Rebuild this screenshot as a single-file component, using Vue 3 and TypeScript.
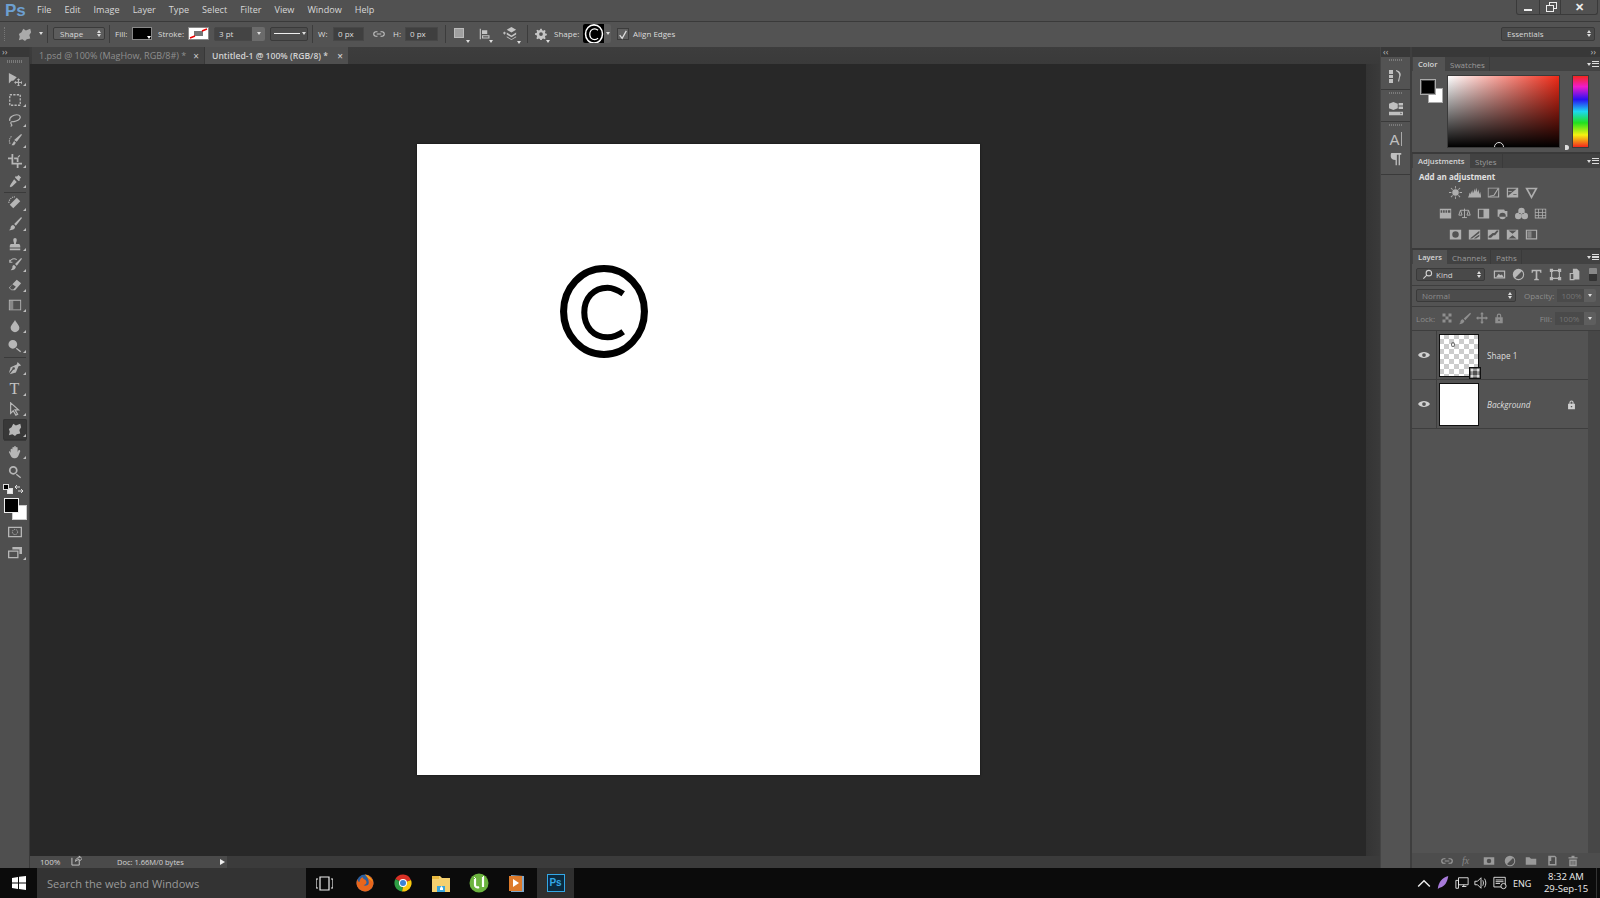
<script setup lang="ts">
import { h } from 'vue'

type IconDef = { f?: string; s?: string; sw?: number; dash?: string; o?: string }
const icons: Record<string, IconDef> = {
  move: { f: 'M1 1v12l3-3 2 0 4-4zM12 7l-2 2h1.3v2H9V10l-2 2 2 2v-1.3h2.3V15H10l2 2 2-2h-1.3v-2.300H15V14l2-2-2-2v1.300h-2.300V9H14z' },
  marquee: { s: 'M2 2h12v12H2z', sw: 1.5, dash: '2.600 1.400' },
  lasso: { s: 'M2 9c-1-4 4-7 8-7s5 3 3 5-6 3-9 3c-1 0-1 2 0 3s0 2-1 2', sw: 1.4 },
  quick: { f: 'M15 1l1 1-6 8-3-2zM7 9l2 2-2 3-3 0z', s: 'M4 4C1 6 1 11 3 13', sw: 1.2, dash: '1.500 1' },
  crop: { f: 'M4 0h2v10h10v2h-4v4h-2v-4H4V6H0V4h4zM7 4h5v5h-2V6H7zM13 1l1 1-2 2-1-1z' },
  dropper: { f: 'M12 1l3 3-2 2 1 1-2 1-4-4 1-2 1 1zM7 6l3 3-5 5-2 1-1-1 1-2z' },
  heal: { f: 'M10 2l4 4-8 8-4-4z', s: 'M1 8C1 4 4 1 8 1', sw: 1.2, dash: '1.500 1' },
  brush: { f: 'M15 0l1 1-7 9-2-2zM6 9l2 2c0 3-3 4-7 4 2-1 2-2 2-3s1-3 3-3z' },
  stamp: { f: 'M6 3a2 2 0 0 1 4 0c0 2-1 3-1 5h4l1 2v2H2v-2l1-2h4c0-2-1-3-1-5zM2 13h12v2H2z' },
  history: { f: 'M15 1l1 1-6 8-2-2zM7 9l2 2c0 2-2 4-6 4 1-1 2-2 2-3s0-3 2-3z', s: 'M2 6a5 5 0 0 1 8-3M2 3v3h3', sw: 1.2 },
  eraser: { f: 'M10 2l5 4-7 8H4l-3-3zM4 13l-2-2 3-4 4 3-3 3z' },
  gradient: { f: 'M1 2h14v12H1zM2 3v10h12V3z', o: 'M2 3h4v10H2z' },
  blur: { f: 'M8 1c2 4 5 6 5 9a5 5 0 0 1-10 0c0-3 3-5 5-9z' },
  dodge: { f: 'M5.500 1a5 5 0 1 1 0 10 5 5 0 0 1 0-10zM10 10l5 4-1 1-5-4z' },
  pen: { f: 'M11 1l4 4-3 1-3 7-7 2 4-5a1.500 1.500 0 1 0-1-1l-4 5 2-7 7-3z' },
  select: { s: 'M3 1l0 12 3-3 3 5 2-1-3-5h4z', sw: 1.4 },
  shape: { f: 'M6 2l3 2 5-2 1 4-2 3 1 4-4 1-2 2-3-2-4 1 1-4-1-3 3-2z' },
  hand: { f: 'M3 9V5c0-1 2-1 2 0v2V3c0-1 2-1 2 0v4V2c0-1 2-1 2 0v5V3c0-1 2-1 2 0v5l1-2c1-1 2 0 2 1l-2 5c-1 2-2 3-4 3H7c-2 0-3-1-4-3L1 8c0-1 1-1.500 2 1z' },
  zoom: { f: 'M6 1a5 5 0 1 1 0 10 5 5 0 0 1 0-10zM6 3a3 3 0 1 0 0 6 3 3 0 0 0 0-6zM10 10l5 4-1 1-5-4z' },
  qmask: { f: 'M0 2h16v12H0zM1.500 3.500v9h13v-9z', s: 'M11 8a3 3 0 1 1-6 0 3 3 0 0 1 6 0z', sw: 1, dash: '1.500 1' },
  screen: { f: 'M5 1h11v8h-3V4H5zM0 5h12v9H0zM1.500 6.500v6h9v-6z' },
  link: { s: 'M6 5H4a3 3 0 0 0 0 6h2M10 5h2a3 3 0 0 1 0 6h-2M5 8h6', sw: 1.4 },
  gear: { f: 'M7 1h2l.5 2 1.500.6 1.800-1 1.400 1.400-1 1.800.6 1.500 2 .5v2l-2 .5-.6 1.500 1 1.800-1.400 1.400-1.800-1-1.500.6-.5 2H7l-.5-2-1.500-.6-1.800 1-1.400-1.400 1-1.800L2.200 9.500 0 9V7l2.200-.5.600-1.500-1-1.800L3.200 2.200 5 3.200l1.500-.6zM8 5.500a2.500 2.500 0 1 0 0 5 2.500 2.500 0 0 0 0-5z' },
  align: { f: 'M1 1h1.500v14H1zM4 3h7v5H4zM4 9.500h10V14H4zM5.500 11v1.500h7V11z' },
  arrange: { f: 'M9 1l5 3-5 3-5-3zM4 7l5 3 5-3v2l-5 3-5-3zM4 11l5 3 5-3v1l-5 3-5-3zM0 7h1V6h1v1h1v1H2v1H1V8H0z' },
  eye: { f: 'M0 8c2-3 5-4 8-4s6 1 8 4c-2 3-5 4-8 4s-6-1-8-4zM8 5.500a2.500 2.500 0 1 0 0 5 2.500 2.500 0 0 0 0-5z' },
  lock: { f: 'M5 7V5a3 3 0 0 1 6 0v2h2v8H3V7zM6.500 7h3V5a1.500 1.500 0 0 0-3 0zM7 10v2h2v-2z' },
  search: { s: 'M14 6a4 4 0 1 0-8 0 4 4 0 0 0 8 0zM7 9l-5 5', sw: 1.6 },
  image: { f: 'M1 3h14v10H1zM2.500 4.500v7h11v-7zM4 11l3-4 2 2 2-1 2 3z' },
  adjust: { f: 'M8 1a7 7 0 1 1 0 14A7 7 0 0 1 8 1zM12 4L4 12a5.500 5.500 0 0 0 8-8z' },
  typeT: { f: 'M2 2h12v4h-1l-1-2H9v9l2 1v1H5v-1l2-1V4H4L3 6H2z' },
  xform: { f: 'M1 1h4v1.500h6V1h4v4h-1.500v6H15v4h-4v-1.500H5V15H1v-4h1.500V5H1zM4 5v6h1v1h6v-1h1V5h-1V4H5v1z' },
  doc: { f: 'M2 6h4V1h5l3 3v10H8v1H2zM3.500 7.500v6h3v-6z' },
  sun: { f: 'M8 4a4 4 0 1 1 0 8 4 4 0 0 1 0-8zM7.500 0h1v3h-1zM7.500 13h1v3h-1zM0 7.500h3v1H0zM13 7.500h3v1h-3zM2 2.700l.7-.7L4.800 4.100l-.7.7zM11.200 11.900l.7-.7 2.100 2.100-.7.7zM2 13.300l2.100-2.100.7.7-2.100 2.100zM11.200 4.100L13.300 2l.7.7-2.100 2.100z' },
  levels: { f: 'M0 14h16v-2l-1-5-1 3-1-6-1 4-2-6-1 5-1-4-1 6-1-4-1 4-1-3-1 4-1-2-1 4z' },
  curves: { f: 'M1 2h14v12H1zM2 3v10h11.500L14 3zM3 12l5-1 5-8 1 1-5 8-6 1z' },
  exposure: { f: 'M1 2h14v12H1zM2.500 3.500V12L13 3.500zM9 10h4v1H9zM3 6h4v1H3z' },
  vib: { s: 'M2 3h12L8 14z', sw: 2 },
  hue: { f: 'M1 2h14v12H1zM2 4v3h2V4zM5 4v3h2V4zM8 4v3h2V4zM11 4v3h3V4z' },
  balance: { s: 'M8 2v11M3 4h10M5 13h6M3 4l-2 6h4zM13 4l-2 6h4z', sw: 1.2 },
  bw: { f: 'M1 2h14v12H1zM2.500 3.500v9H8v-9z' },
  photo: { f: 'M2 3h8l1 2h3v7H2zM8 7a4 4 0 1 0 0 8 4 4 0 0 0 0-8z' },
  mixer: { f: 'M8 1a4 4 0 1 1 0 8 4 4 0 0 1 0-8zM4 7a4 4 0 1 1 0 8 4 4 0 0 1 0-8zM12 7a4 4 0 1 1 0 8 4 4 0 0 1 0-8z' },
  lookup: { f: 'M1 2h14v12H1zM2 3v3h3V3zM6 3v3h4V3zM11 3v3h3V3zM2 7v3h3V7zM6 7v3h4V7zM11 7v3h3V7zM2 11v2h3v-2zM6 11v2h4v-2zM11 11v2h3v-2z' },
  invert: { f: 'M1 2h14v12H1zM8 4a4 4 0 1 0 0 8 4 4 0 0 0 0-8z' },
  poster: { f: 'M1 2h14v12H1zM2.500 13L14 3.500V6L5 13zM7 13l7-5v2l-4 3z' },
  thresh: { f: 'M1 2h14v12H1zM2 12h3l3-3h2l4-5V3h-2L9 6H7l-5 4z' },
  selcol: { f: 'M1 2h14v12H1zM3 3l5 4 5-4zM3 13l5-4 5 4z' },
  gmap: { f: 'M1 2h14v12H1zM2.500 3.500v9h11v-9z', o: 'M3 4h5v8H3z' },
  checker: { f: 'M2 2h4v4H2zM6 6h4v4H6zM10 2h4v4h-4zM2 10h4v4H2zM10 10h4v4h-4z' },
  paint: { f: 'M15 1l1 1-7 8-2-2zM6 9l2 2c-1 3-4 4-7 4 2-1 2-2 2-3s1-3 3-3z' },
  moveArrows: { f: 'M8 0l2.500 3H9v4h4V5.500L16 8l-3 2.500V9H9v4h1.500L8 16l-2.500-3H7V9H3v1.500L0 8l3-2.500V7h4V3H5.500z' },
  chain: { s: 'M6 5H4a3 3 0 0 0 0 6h2M10 5h2a3 3 0 0 1 0 6h-2M5 8h6', sw: 1.6 },
  mask: { f: 'M1 3h14v10H1zM8 5a3 3 0 1 0 0 6 3 3 0 0 0 0-6z' },
  folder: { f: 'M1 3h5l2 2h7v8H1z' },
  newl: { f: 'M3 1h9l2 2v11H3zM7 3v5H5v4h7V3z' },
  trash: { f: 'M6 1h4v2h4v1.500H2V3h4zM3 6h10v9H3zM5 8v5h1V8zM7.500 8v5h1V8zM10 8v5h1V8z' },
  history2: { f: 'M1 1h4v4H1zM1 6h4v3H1zM1 10h4v4H1zM8 1c4 1 6 4 4 7l-1 5-1-1 1-4c1-3-1-5-3-6z' },
  cube: { f: 'M5 0l5 2v5l-5 2-5-2V2zM11 1h5v3h-5zM11 5h5v3h-5zM0 11h16v4H0zM13 12v2l2-1z' },
  para: { f: 'M3 1h11v2h-1.500v12H11V3H9v12H7.500V9C4 9 2 7 2 5s0-4 1-4z' }
}

const Ico = (p: { n: string; size?: number }) => {
  const d = icons[p.n] ?? {}
  const sz = p.size ?? 14
  const kids = []
  if (d.o) kids.push(h('path', { d: d.o, fill: 'currentColor', opacity: 0.55 }))
  if (d.f) kids.push(h('path', { d: d.f, fill: 'currentColor', 'fill-rule': 'evenodd' }))
  if (d.s) kids.push(h('path', { d: d.s, fill: 'none', stroke: 'currentColor', 'stroke-width': d.sw ?? 1.4, 'stroke-dasharray': d.dash }))
  return h('svg', { width: sz, height: sz, viewBox: '0 0 16 16', style: 'display:block;flex:none' }, kids)
}

const menu = ['File', 'Edit', 'Image', 'Layer', 'Type', 'Select', 'Filter', 'View', 'Window', 'Help']

const toolsA = ['move', 'marquee', 'lasso', 'quick', 'crop', 'dropper']
const toolsB = ['heal', 'brush', 'stamp', 'history', 'eraser', 'gradient', 'blur', 'dodge']

const adjRows = [
  ['sun', 'levels', 'curves', 'exposure', 'vib'],
  ['hue', 'balance', 'bw', 'photo', 'mixer', 'lookup'],
  ['invert', 'poster', 'thresh', 'selcol', 'gmap']
]
const layers = [
  { name: 'Shape 1', italic: false, checker: true },
  { name: 'Background', italic: true, checker: false }
]
const footerIcons = ['chain', 'fx', 'mask', 'adjust', 'folder', 'newl', 'trash']
</script>

<template>
  <div class="app">
    <header class="menubar">
      <span class="logo">Ps</span>
      <nav class="menus"><span v-for="m in menu" :key="m">{{ m }}</span></nav>
      <div class="winctl">
        <span class="wbtn w1"><i class="min"></i></span>
        <span class="wbtn w2"><i class="rest r2"></i><i class="rest"></i></span>
        <span class="wbtn w3">✕</span>
      </div>
    </header>

    <section class="options">
      <span class="grip-v"></span>
      <span class="opt-tool"><Ico n="shape" :size="14" /></span><b class="tri t1"></b>
      <span class="sep s1"></span>
      <span class="select shape-sel">Shape<em class="updown"></em></span>
      <span class="sep s2"></span>
      <label class="lb fill">Fill:</label>
      <span class="swatch black"><b class="tri in"></b></span>
      <label class="lb stroke">Stroke:</label>
      <span class="swatch strokeb">
        <svg viewBox="0 0 21 13" width="21" height="13"><path d="M6 4h9v5H6z" fill="#777" /><path d="M2 11l5-2M14 4l5-2" stroke="#e00" stroke-width="1.500" /></svg>
        <b class="tri in"></b>
      </span>
      <span class="input pt">3 pt</span><span class="dd"><b class="tri"></b></span>
      <span class="select line"><i class="ln"></i><b class="tri"></b></span>
      <span class="sep s3"></span>
      <label class="lb wl">W:</label>
      <span class="input dim">0 px</span>
      <span class="opt-ic lk"><Ico n="link" :size="12" /></span>
      <label class="lb hl">H:</label>
      <span class="input dim">0 px</span>
      <span class="sep s4"></span>
      <span class="opt-ic a1"><i class="sq"></i><b class="tri cor"></b></span>
      <span class="opt-ic a2"><Ico n="align" :size="12" /><b class="tri cor"></b></span>
      <span class="opt-ic a3"><Ico n="arrange" :size="15" /><b class="tri cor"></b></span>
      <span class="sep s5"></span>
      <span class="opt-ic a4"><Ico n="gear" :size="12" /><b class="tri cor"></b></span>
      <label class="lb shl">Shape:</label>
      <span class="picker">
        <span class="picker-b">
          <svg viewBox="0 0 87 92" width="20" height="20"><ellipse cx="43.500" cy="46" rx="39" ry="42" fill="none" stroke="#fff" stroke-width="7" /><path d="M62 29C56 24 50 22.500 47 22.500C33 22.500 24 33 24 47C24 61 33 71.500 47 71.500C52 71.500 57 70 62 65" fill="none" stroke="#fff" stroke-width="6" /></svg>
        </span>
        <span class="picker-a"><b class="tri"></b></span>
      </span>
      <span class="check"><svg viewBox="0 0 12 12" width="10" height="10"><path d="M2 6l3 4 5-9" fill="none" stroke="#ddd" stroke-width="1.500" /></svg></span>
      <label class="lb aligne">Align Edges</label>
      <span class="spacer"></span>
      <span class="select essentials">Essentials<em class="updown"></em></span>
    </section>

    <main class="main">
      <aside class="toolbar">
        <div class="coll left"><span class="chev">››</span></div>
        <div class="tools">
          <span class="grip"></span>
          <span v-for="t in toolsA" :key="t" class="tool"><Ico :n="t" :size="14" /><b class="corner"></b></span>
          <span class="tsep"></span>
          <span v-for="t in toolsB" :key="t" class="tool"><Ico :n="t" :size="14" /><b class="corner"></b></span>
          <span class="tsep"></span>
          <span class="tool"><Ico n="pen" :size="14" /><b class="corner"></b></span>
          <span class="tool ttxt">T<b class="corner"></b></span>
          <span class="tool"><Ico n="select" :size="14" /><b class="corner"></b></span>
          <span class="tool on"><Ico n="shape" :size="14" /><b class="corner"></b></span>
          <span class="tsep"></span>
          <span class="tool"><Ico n="hand" :size="14" /><b class="corner"></b></span>
          <span class="tool"><Ico n="zoom" :size="14" /></span>
          <div class="minis">
            <span class="mini"><i class="mb"></i><i class="mw"></i></span>
            <svg viewBox="0 0 10 10" width="10" height="10"><path d="M1 3h5M1 3l2-2M1 3l2 2M9 7H4M9 7L7 5M9 7L7 9" stroke="#ddd" fill="none" /></svg>
          </div>
          <div class="colors"><i class="bg"></i><i class="fg"></i></div>
          <span class="tool"><Ico n="qmask" :size="14" /></span>
          <span class="tool"><Ico n="screen" :size="14" /><b class="corner"></b></span>
        </div>
      </aside>

      <div class="docwrap">
        <div class="tabs">
          <span class="tab t-a">1.psd @ 100% (MagHow, RGB/8#) *<i>×</i></span>
          <span class="tab t-b">Untitled-1 @ 100% (RGB/8) *<i>×</i></span>
        </div>
        <div class="docbody">
          <div class="doc">
            <div class="canvas">
              <svg class="copy" viewBox="0 0 87 92" width="88" height="93">
                <ellipse cx="43.500" cy="46" rx="40" ry="42.500" fill="none" stroke="#000" stroke-width="7" />
                <path d="M62.500 28.500C56 24 50 22.500 47 22.500C33 22.500 24 33 24 47C24 61 33 71.500 47 71.500C52 71.500 57 70 62.500 66" fill="none" stroke="#000" stroke-width="6" />
              </svg>
            </div>
          </div>
          <div class="vscroll"></div>
        </div>
        <div class="status">
          <div class="st-l">
            <span class="zoomv">100%</span>
            <span class="st-ic"><svg viewBox="0 0 12 12" width="11" height="11"><path d="M1 3v8h8V7M5 7c0-3 2-4 4-4V1l3 3-3 3V5C7 5 6 6 5 7z" fill="none" stroke="#ccc" /></svg></span>
            <span class="docinfo">Doc: 1.66M/0 bytes</span>
            <b class="play"></b>
          </div>
        </div>
      </div>

      <aside class="dock">
        <div class="coll"><span class="chev">‹‹</span></div>
        <div class="dgroup g1"><span class="grip small"></span><Ico n="history2" :size="16" /></div>
        <div class="dgroup g2"><span class="grip small"></span><Ico n="cube" :size="14" /></div>
        <div class="dgroup g3">
          <span class="grip small"></span>
          <span class="aicon">A<i></i></span>
          <Ico n="para" :size="14" />
        </div>
      </aside>

      <aside class="panels">
        <div class="coll right"><span class="chev">››</span></div>

        <section class="panel colorp">
          <div class="ptabs">
            <span class="ptab on w-color">Color</span>
            <span class="ptab w-sw">Swatches</span>
            <span class="pmenu"><b class="tri"></b><i></i></span>
          </div>
          <div class="colorbody">
            <div class="fgbg"><i class="bg"></i><i class="fg"></i></div>
            <div class="spectrum"><i class="ring"></i></div>
            <div class="hue"></div>
            <i class="hue-dot"></i>
          </div>
        </section>

        <section class="panel adjp">
          <div class="ptabs">
            <span class="ptab on w-adj">Adjustments</span>
            <span class="ptab w-st">Styles</span>
            <span class="pmenu"><b class="tri"></b><i></i></span>
          </div>
          <div class="adjbody">
            <div class="adjtitle">Add an adjustment</div>
            <div v-for="(row, i) in adjRows" :key="i" class="adjrow">
              <Ico v-for="a in row" :key="a" :n="a" :size="13" />
            </div>
          </div>
        </section>

        <section class="panel layersp">
          <div class="ptabs">
            <span class="ptab on w-lay">Layers</span>
            <span class="ptab w-ch">Channels</span>
            <span class="ptab w-pa">Paths</span>
            <span class="pmenu"><b class="tri"></b><i></i></span>
          </div>
          <div class="lrow filter">
            <span class="select kind"><Ico n="search" :size="11" /><span>Kind</span><em class="updown"></em></span>
            <span class="licons">
              <Ico n="image" :size="13" /><Ico n="adjust" :size="13" /><Ico n="typeT" :size="13" /><Ico n="xform" :size="13" /><Ico n="doc" :size="13" />
            </span>
            <span class="toggle"></span>
          </div>
          <div class="lrow blend">
            <span class="select normal off">Normal<em class="updown"></em></span>
            <label class="lb off l-op">Opacity:</label>
            <span class="pct">100%</span><span class="dd small"><b class="tri"></b></span>
          </div>
          <div class="lrow lockr">
            <label class="lb off">Lock:</label>
            <span class="lockicons">
              <Ico n="checker" :size="12" /><Ico n="paint" :size="13" /><Ico n="moveArrows" :size="12" /><Ico n="lock" :size="12" />
            </span>
            <label class="lb off l-fi">Fill:</label>
            <span class="pct">100%</span><span class="dd small"><b class="tri"></b></span>
          </div>
          <div class="llist">
            <div class="rows">
              <div v-for="l in layers" :key="l.name" class="layer">
                <span class="eye"><Ico n="eye" :size="12" /></span>
                <span class="thumb" :class="{ checker: l.checker }">
                  <template v-if="l.checker">
                    <i class="speck"></i>
                    <span class="smart"><Ico n="xform" :size="10" /></span>
                  </template>
                </span>
                <span class="lname" :class="{ it: l.italic }">{{ l.name }}</span>
                <span v-if="l.italic" class="llock"><Ico n="lock" :size="11" /></span>
              </div>
            </div>
            <div class="lscroll"></div>
          </div>
          <div class="lfoot">
            <template v-for="f in footerIcons" :key="f">
              <span v-if="f === 'fx'" class="fx">fx</span>
              <Ico v-else :n="f" :size="12" />
            </template>
          </div>
        </section>
      </aside>
    </main>

    <footer class="taskbar">
      <span class="win">
        <svg viewBox="0 0 14 14" width="14" height="14"><path d="M0 2l6-1v5.500H0zM7 .800L14 0v6.500H7zM0 7.500h6V13l-6-1zM7 7.500h7V14l-7-1z" fill="#fff" /></svg>
      </span>
      <span class="searchbox">Search the web and Windows</span>
      <span class="ti task">
        <svg viewBox="0 0 17 15" width="17" height="15"><path d="M4 1h9v13H4zM2 3H0v9h2M15 3h2v9h-2" fill="none" stroke="#eee" stroke-width="1.200" /></svg>
      </span>
      <span class="ti">
        <svg viewBox="0 0 18 18" width="18" height="18"><circle cx="9" cy="9" r="8.500" fill="#2c5f9e" /><path d="M9 .500A8.500 8.500 0 1 1 1.500 5c0 2 1 3 2 3 0-2 1-4 3-5 0 1 1 2 3 3 2 2 1 5-2 5 1 1 4 1 5-1 1-3-1-7-3.500-9.500z" fill="#e8661c" /><path d="M9 .500c3 1 7 4 8 8-1-2-2-3-4-4z" fill="#f9b81c" /></svg>
      </span>
      <span class="ti">
        <svg viewBox="0 0 18 18" width="18" height="18"><path d="M9 9L1.400 5A8.500 8.500 0 0 1 16.900 6z" fill="#d93025" /><path d="M9 9l8 -3A8.500 8.500 0 0 1 8 17.500z" fill="#f9c80e" /><path d="M9 9l-1 8.500A8.500 8.500 0 0 1 1.400 5z" fill="#2f9e44" /><circle cx="9" cy="9" r="4" fill="#fff" /><circle cx="9" cy="9" r="3" fill="#3b82d6" /></svg>
      </span>
      <span class="ti">
        <svg viewBox="0 0 18 17" width="18" height="17"><path d="M0 1h8l2 2h8v14H0z" fill="#f5d06f" /><path d="M0 1h7v3H0z" fill="#e8b93f" /><path d="M5 11h8v6H5z" fill="#3aa6dc" /><path d="M8 13l1.500-2 1.500 2v2H8z" fill="#fff" /></svg>
      </span>
      <span class="ti">
        <svg viewBox="0 0 20 20" width="20" height="20"><circle cx="10" cy="10" r="9.500" fill="#6cb33f" /><path d="M6 6v6c0 2 2 3 4 2M14 4v10" stroke="#fff" stroke-width="2.200" fill="none" /><path d="M5 4l2 2M13 5l2-2" stroke="#fff" /></svg>
      </span>
      <span class="ti">
        <svg viewBox="0 0 17 18" width="17" height="18"><path d="M2 1l13 1v16H2z" fill="#7fa6c9" /><path d="M0 2h13v15H0z" fill="#dd7a2a" /><path d="M4 5l6 4-6 4z" fill="#fff" /></svg>
      </span>
      <span class="ti active"><span class="psb">Ps</span></span>

      <span class="spacer"></span>
      <span class="tray">
        <svg class="tr" viewBox="0 0 12 8"><path d="M1 7l5-5 5 5" fill="none" stroke="#eee" stroke-width="1.200" /></svg>
        <svg class="tr" viewBox="0 0 14 16"><path d="M13 0C6 2 2 7 1 15c1-1 2-2 3-2 5-1 8-6 9-13z" fill="#a77ad9" /></svg>
        <svg class="tr" viewBox="0 0 16 14"><path d="M4 1h11v8H4zM1 4h3v9H1zM8 11h5M10 9v2" fill="none" stroke="#eee" /></svg>
        <svg class="tr" viewBox="0 0 16 14"><path d="M1 5h3l4-4v12L4 9H1zM10 4c1 2 1 4 0 6M12 2c2 3 2 7 0 10" fill="none" stroke="#eee" /></svg>
        <svg class="tr" viewBox="0 0 16 15"><path d="M1 1h13v11H1z" fill="none" stroke="#eee" /><path d="M3 4h9M3 6h9M3 8h5" stroke="#eee" /><circle cx="12" cy="11" r="3" fill="#111" stroke="#eee" /></svg>
        <span class="eng">ENG</span>
        <span class="clock"><span>8:32 AM</span><span>29-Sep-15</span></span>
        <i class="showd"></i>
      </span>
    </footer>
  </div>
</template>

<style>
html, body { margin: 0; background: #535353; }
</style>

<style scoped>
.app {
  width: 1600px;
  height: 898px;
  display: flex;
  flex-direction: column;
  overflow: hidden;
  background: #535353;
  color: #d4d4d4;
  font: 10px "Open Sans", "Liberation Sans", sans-serif;
}

/* menu */
.menubar {
  height: 21px;
  flex: none;
  display: flex;
  align-items: center;
  background: #515151;
  border-bottom: 1px solid #3a3a3a;
  position: relative;
}
.logo { margin-left: 5px; width: 32px; font: bold 17px "Liberation Sans", sans-serif; color: #6d9fd0; }
.menus { display: flex; gap: 13px; font-size: 9.100px; color: #d8d8d8; margin-bottom: 2px; }
.winctl { margin-left: auto; margin-right: 2px; margin-top: -7px; display: flex; height: 14px; border: 1px solid #3a3a3a; border-top: 0; border-radius: 0 0 3px 3px; }
.wbtn { display: flex; align-items: center; justify-content: center; border-right: 1px solid #3a3a3a; position: relative; color: #eee; }
.w1 { width: 22px; } .w2 { width: 20px; } .w3 { width: 36px; border: 0; font-size: 11px; font-weight: bold; }
.min { width: 8px; height: 2px; background: #eee; margin-top: 6px; }
.rest { position: absolute; left: 6px; top: 5px; width: 6px; height: 5px; border: 1px solid #eee; background: #535353; }
.r2 { left: 9px; top: 2px; }

/* options */
.options {
  height: 25px;
  flex: none;
  display: flex;
  align-items: center;
  background: #535353;
  padding-bottom: 2px;
  box-sizing: border-box;
}
.grip-v { width: 1px; height: 14px; margin-left: 4px; border-left: 1px dotted #777; box-sizing: border-box; flex: none; }
.opt-tool { margin-left: 13px; width: 14px; flex: none; color: #aaa; }
.tri { display: inline-block; width: 0; height: 0; border-left: 2.500px solid transparent; border-right: 2.500px solid transparent; border-top: 3px solid #ddd; }
.t1 { margin-left: 7px; flex: none; }
.sep { width: 1px; height: 18px; background: #3c3c3c; flex: none; }
.s1 { margin-left: 4px; }
.select {
  height: 13px;
  display: inline-flex;
  align-items: center;
  box-sizing: border-box;
  border: 1px solid #3a3a3a;
  border-radius: 2px;
  background: #5c5c5c;
  position: relative;
  color: #d8d8d8;
  font-size: 8px;
  flex: none;
}
.updown { position: absolute; right: 3px; top: 2px; width: 0; height: 0; border-left: 2px solid transparent; border-right: 2px solid transparent; border-bottom: 3px solid #ddd; }
.updown::after { content: ""; position: absolute; left: -2px; top: 4px; width: 0; height: 0; border-left: 2px solid transparent; border-right: 2px solid transparent; border-top: 3px solid #ddd; }
.shape-sel { width: 52px; margin-left: 5px; padding-left: 6px; }
.s2 { margin-left: 4px; }
.lb { font-size: 8px; color: #dcdcdc; white-space: nowrap; display: block; flex: none; }
.fill { margin-left: 5px; width: 11px; }
.swatch { width: 20px; height: 13px; margin-left: 6px; box-sizing: border-box; border: 1px solid #888; position: relative; display: block; overflow: hidden; flex: none; }
.black { background: #000; }
.strokeb { background: #fff; width: 21px; }
.strokeb svg { position: absolute; left: -1px; top: -1px; }
.tri.in { position: absolute; right: 0; bottom: 0; border-top-color: #fff; }
.stroke { margin-left: 6px; width: 24px; }
.input { height: 14px; width: 31px; box-sizing: border-box; display: inline-flex; align-items: center; padding-left: 4px; background: #3f3f3f; border: 1px solid #474747; font-size: 8px; color: #dcdcdc; flex: none; }
.pt { width: 38px; margin-left: 5px; background: #444; border-radius: 2px 0 0 2px; }
.dd { width: 13px; height: 14px; background: #6b6b6b; display: inline-flex; align-items: center; justify-content: center; border-radius: 0 2px 2px 0; flex: none; }
.line { width: 38px; height: 14px; margin-left: 5px; background: #4d4d4d; justify-content: flex-start; }
.ln { width: 26px; height: 1.500px; background: #eee; margin-left: 3px; }
.line .tri { margin-left: 2px; }
.s3 { margin-left: 4px; }
.wl { margin-left: 5px; width: 10px; }
.wl + .input { margin-left: 5px; }
.opt-ic { position: relative; display: block; color: #c4c4c4; flex: none; }
.lk { margin-left: 9px; width: 12px; }
.hl { margin-left: 8px; width: 7px; }
.hl + .input { margin-left: 5px; width: 33px; }
.s4 { margin-left: 7px; }
.a1 { margin-left: 8px; width: 14px; height: 12px; }
.sq { display: block; width: 10px; height: 10px; background: #a0a0a0; border: 1px solid #bbb; box-sizing: border-box; }
.cor { position: absolute; right: -2px; bottom: -3px; }
.a2 { margin-left: 11px; width: 12px; }
.a3 { margin-left: 12px; width: 16px; }
.s5 { margin-left: 8px; }
.a4 { margin-left: 7px; width: 13px; }
.shl { margin-left: 6px; width: 25px; }
.picker { display: flex; height: 19px; margin-left: 4px; border-radius: 2px; overflow: hidden; flex: none; }
.picker-b { width: 21px; background: #000; display: flex; align-items: center; justify-content: center; }
.picker-a { width: 7px; background: #5d5d5d; display: flex; align-items: center; justify-content: center; }
.check { width: 12px; height: 12px; margin-left: 6px; background: #5f5f5f; border: 1px solid #3c3c3c; display: block; box-sizing: border-box; flex: none; }
.aligne { margin-left: 4px; }
.spacer { flex: 1; }
.essentials { width: 94px; height: 14px; margin-right: 5px; padding-left: 5px; background: #4a4a4a; }

/* main */
.main { flex: 1; min-height: 0; display: flex; }
.coll { height: 10px; flex: none; background: #383838; display: flex; align-items: center; font-size: 9px; color: #bbb; }
.chev { line-height: 8px; margin-left: 2px; }
.coll.left { width: 100%; }
.toolbar { width: 30px; flex: none; display: flex; flex-direction: column; background: #4f4f4f; border-right: 1px solid #3a3a3a; box-sizing: border-box; }
.tools { display: flex; flex-direction: column; align-items: center; padding-top: 3px; }
.grip { width: 16px; height: 3px; margin-bottom: 6px; background: repeating-linear-gradient(90deg, #7a7a7a 0 1px, transparent 1px 2px); }
.grip.small { width: 14px; height: 2px; margin: 2px auto 8px; }
.tool { width: 100%; height: 20.400px; display: flex; align-items: center; justify-content: center; position: relative; color: #b6b6b6; flex: none; }
.tool.on { width: 24px; background: #383838; border-radius: 2px; box-shadow: inset 0 0 0 1px #333; }
.corner { position: absolute; right: 3px; bottom: 3px; width: 0; height: 0; border-left: 3px solid transparent; border-bottom: 3px solid #bdbdbd; }
.tool.on .corner { right: 1px; }
.tsep { width: 22px; height: 1px; background: #3a3a3a; margin: .400px 0; flex: none; }
.ttxt { font: 16px "Liberation Serif", serif; color: #c4c4c4; }
.minis { display: flex; width: 100%; justify-content: space-between; padding: 2px 5px 0 3px; box-sizing: border-box; flex: none; }
.mini { position: relative; width: 10px; height: 10px; display: block; }
.mb, .mw { position: absolute; width: 6px; height: 6px; box-sizing: border-box; border: 1px solid #ddd; }
.mb { background: #000; left: 0; top: 0; z-index: 1; }
.mw { background: #eee; left: 4px; top: 4px; }
.colors { position: relative; width: 30px; height: 28px; flex: none; }
.colors .fg { position: absolute; left: 4px; top: 4px; width: 15px; height: 15px; background: #000; border: 1px solid #eee; box-sizing: border-box; }
.colors .bg { position: absolute; left: 12px; top: 11px; width: 15px; height: 15px; background: #fff; box-sizing: border-box; border: 1px solid #ccc; }

.docwrap { width: 1350px; flex: none; display: flex; flex-direction: column; }
.tabs { height: 17px; flex: none; background: linear-gradient(#3d3d3d, #3a3a3a); display: flex; align-items: stretch; padding-left: 2px; }
.tab { display: flex; align-items: center; padding-left: 7px; box-sizing: border-box; position: relative; }
.tab i { position: absolute; right: 5px; top: 2px; font-style: normal; font-size: 10px; color: #ccc; }
.t-a { width: 173px; background: #434343; color: #8f8f8f; border-right: 1px solid #383838; font-size: 9px; }
.t-b { width: 143px; background: #4f4f4f; color: #d2d2d2; font-weight: 600; font-size: 8.600px; }
.docbody { flex: 1; min-height: 0; display: flex; }
.doc { flex: 1; background: #282828; display: flex; align-items: center; justify-content: center; }
.canvas { width: 563px; height: 631px; background: #fff; position: relative; box-shadow: 0 0 2px #111; }
.copy { position: absolute; left: 143px; top: 121px; }
.vscroll { width: 14px; flex: none; background: linear-gradient(90deg, #343434, #3a3a3a); }
.status { height: 12.500px; flex: none; background: #3b3b3b; display: flex; }
.st-l { width: 197px; background: #4a4a4a; display: flex; align-items: center; font-size: 8px; color: #d4d4d4; position: relative; }
.zoomv { margin-left: 10px; width: 20px; }
.st-ic { margin-left: 11px; display: block; }
.docinfo { margin-left: 35px; font-size: 7.500px; }
.play { position: absolute; right: 2px; top: 3px; width: 0; height: 0; border-top: 3.500px solid transparent; border-bottom: 3.500px solid transparent; border-left: 5px solid #eee; }

.dock { width: 32px; flex: none; background: #535353; display: flex; flex-direction: column; border-right: 2px solid #3e3e3e; border-left: 1px solid #444; box-sizing: border-box; color: #c0c0c0; }
.dgroup { display: flex; flex-direction: column; align-items: center; border-bottom: 1px solid #3a3a3a; box-sizing: border-box; }
.g1 { height: 33px; } .g2 { height: 32px; } .g3 { height: 53px; gap: 4px; }
.g3 .grip.small { margin-bottom: 0; }
.aicon { font: 15px "Liberation Sans", sans-serif; color: #c0c0c0; display: flex; align-items: center; height: 18px; }
.aicon i { width: 1px; height: 14px; background: #aaa; margin-left: 1px; }

.panels { flex: 1; min-width: 0; display: flex; flex-direction: column; }
.coll.right { justify-content: flex-end; padding-right: 4px; }
.panel { display: flex; flex-direction: column; }
.ptabs { height: 14px; flex: none; background: #424242; display: flex; position: relative; align-items: stretch; }
.ptab { display: flex; align-items: center; padding-left: 5px; font-size: 8px; box-sizing: border-box; color: #9a9a9a; border-right: 1px solid #3a3a3a; }
.ptab.on { background: #535353; color: #d6d6d6; font-weight: 600; font-size: 7.600px; border-right: 0; }
.w-color { width: 32px; margin-left: 1px; } .w-sw { width: 45px; }
.w-adj { width: 57px; margin-left: 1px; } .w-st { width: 33px; }
.w-lay { width: 34px; margin-left: 1px; } .w-ch { width: 44px; } .w-pa { width: 31px; }
.pmenu { position: absolute; right: 1px; top: 4px; display: flex; align-items: center; gap: 1px; }
.pmenu i { width: 7px; height: 6px; background: repeating-linear-gradient(#ddd 0 1px, transparent 1px 2.500px); }
.colorp { height: 95px; flex: none; }
.colorbody { flex: 1; position: relative; }
.fgbg { position: absolute; left: 8px; top: 8px; width: 24px; height: 24px; }
.fgbg .bg { position: absolute; left: 8px; top: 9px; width: 15px; height: 15px; background: #fff; border: 1px solid #aaa; box-sizing: border-box; }
.fgbg .fg { position: absolute; left: 0; top: 0; width: 16px; height: 16px; background: #000; border: 1px solid #aaa; box-sizing: border-box; box-shadow: inset 0 0 0 1px #444; }
.spectrum { position: absolute; left: 36px; top: 5px; width: 111px; height: 71px; background: linear-gradient(to top, #000, rgba(0,0,0,0)), linear-gradient(to right, #fff, #ef2a17); box-shadow: 0 0 0 1px #3a3a3a; overflow: hidden; }
.ring { position: absolute; left: 46px; bottom: -5px; width: 8px; height: 8px; border: 1px solid #ddd; border-radius: 50%; }
.hue { position: absolute; left: 161px; top: 5px; width: 15px; height: 71px; background: linear-gradient(#f3281d 0, #f01bcb 15%, #2a10f2 33%, #1cd9f0 50%, #22e01e 66%, #f5f211 83%, #f3281d 100%); box-shadow: 0 0 0 1px #3a3a3a; }
.hue-dot { position: absolute; left: 153px; top: 74px; width: 4px; height: 5px; background: #ddd; border-radius: 0 3px 3px 0; }
.adjp { flex: none; border-top: 2px solid #3a3a3a; box-sizing: border-box; height: 96px; }
.adjbody { flex: 1; }
.adjtitle { margin: 3px 0 0 7px; font-size: 8px; line-height: 11px; font-weight: 700; color: #e0e0e0; }
.adjrow { display: flex; justify-content: center; gap: 6px; margin-left: 24px; width: 114px; height: 21px; align-items: center; color: #aeaeae; }
.layersp { flex: 1; min-height: 0; border-top: 2px solid #3a3a3a; box-sizing: border-box; }
.lrow { display: flex; align-items: center; box-sizing: border-box; border-bottom: 1px solid #3e3e3e; padding-left: 4px; flex: none; }
.filter { height: 21.500px; }
.kind { width: 69px; gap: 3px; padding-left: 5px; color: #d0d0d0; background: #494949; }
.licons { margin-left: 8px; display: flex; gap: 5.700px; color: #b8b8b8; }
.toggle { width: 8px; height: 13px; margin-left: 8px; background: linear-gradient(#888 0 45%, #333 45%); border-radius: 1px; }
.blend { height: 21px; }
.normal { width: 100px; padding-left: 5px; }
.off { color: #8d8d8d; }
.select.off { background: #4c4c4c; color: #8d8d8d; }
.l-op { margin-left: 8px; }
.pct { width: 29px; height: 13px; margin-left: 3px; background: #4a4a4a; color: #747474; font-size: 8px; display: inline-flex; align-items: center; padding-left: 4px; box-sizing: border-box; }
.dd.small { width: 12px; height: 13px; background: #5e5e5e; }
.lockr { height: 24.500px; }
.lockicons { margin-left: 6px; display: flex; gap: 5px; color: #8f8f8f; align-items: center; }
.l-fi { margin-left: auto; }
.lockr .dd, .blend .dd { margin-right: 4px; }
.lb.off { color: #8d8d8d; }
.llist { flex: 1; min-height: 0; display: flex; }
.rows { flex: 1; }
.lscroll { width: 12px; background: #474747; flex: none; }
.layer { height: 49px; display: flex; align-items: center; box-sizing: border-box; border-bottom: 1px solid #3e3e3e; position: relative; }
.eye { width: 24px; height: 100%; flex: none; display: flex; align-items: center; justify-content: center; border-right: 1px solid #3e3e3e; color: #d0d0d0; box-sizing: content-box; }
.thumb { width: 40px; height: 43px; margin-left: 2px; background: #fff; position: relative; flex: none; box-shadow: inset 0 0 0 1px #111; }
.checker { background-color: #fff; background-image: conic-gradient(#ccc 25%, #fff 0 50%, #ccc 0 75%, #fff 0); background-size: 10px 10px; }
.speck { position: absolute; left: 12px; top: 8px; width: 4px; height: 5px; border: 1px solid #666; border-radius: 50%; box-sizing: border-box; }
.smart { position: absolute; right: -1px; bottom: -1px; width: 10px; height: 10px; background: #535353; color: #ddd; outline: 1px solid #111; }
.lname { margin-left: 8px; font-size: 8.200px; color: #dedede; }
.lname.it { font-style: italic; }
.llock { position: absolute; right: 11px; top: 19px; color: #d0d0d0; }
.lfoot { height: 15px; flex: none; display: flex; align-items: center; gap: 9px; padding-left: 29px; color: #9a9a9a; background: #4d4d4d; }
.fx { font: italic 10px "Liberation Serif", serif; color: #888; width: 12px; }

/* taskbar */
.taskbar { height: 30px; flex: none; background: #0b0b0b; display: flex; align-items: center; color: #eee; }
.win { width: 37px; display: flex; justify-content: center; }
.searchbox { width: 269px; height: 100%; background: #333; box-sizing: border-box; padding-left: 10px; display: flex; align-items: center; font-size: 11.100px; color: #9a9a9a; }
.ti { width: 38px; height: 100%; display: flex; align-items: center; justify-content: center; flex: none; box-sizing: border-box; }
.task { width: 40px; padding-right: 3px; }
.active { background: #2f2f2f; margin-left: 1px; width: 37px; }
.psb { width: 18px; height: 18px; box-sizing: border-box; background: #0b2a3f; border: 1px solid #33a7e6; color: #33a7e6; font: bold 10px/16px "Liberation Sans", sans-serif; text-align: center; }
.tray { display: flex; align-items: center; height: 100%; flex: none; }
.tr { width: 14px; height: 14px; margin: 0 2.500px; flex: none; }
.eng { margin-left: 4px; width: 18px; font-size: 9px; }
.clock { display: flex; flex-direction: column; align-items: center; margin-left: 14px; font-size: 9.500px; line-height: 12.500px; width: 42px; white-space: nowrap; }
.showd { width: 1px; height: 100%; margin-left: 9px; margin-right: 3px; background: #333; }
</style>
